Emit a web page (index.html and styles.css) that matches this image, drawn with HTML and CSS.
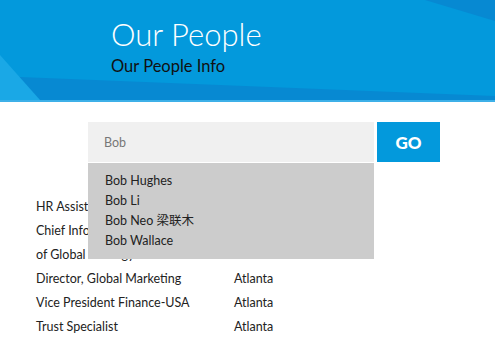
FILE: index.html
```html
<!DOCTYPE html>
<html>
  <head>
    <meta charset="UTF-8" />
    <title>Our People</title>
    <link rel="stylesheet" href="styles.css">
  </head>

  <body>
    <div class="hero">
      <svg class="hero-bg" viewBox="0 0 495 100" preserveAspectRatio="none">
        <polygon points="20,77 495,96 495,100 0,100 0,76" fill="#0789d2" />
        <polygon points="0,55 40,100 0,100" fill="#1aa8e6" />
        <polygon points="425,0 495,0 495,21" fill="#0789d2" />
      </svg>
      <h1>Our People</h1>
      <h2>Our People Info</h2>
    </div>

    <div class="search">
      <div class="search-box">
        <input type="text" class="search-input" value="Bob" />
        <ul class="suggest">
          <li>Bob Hughes</li>
          <li>Bob Li</li>
          <li>Bob Neo 梁联木</li>
          <li>Bob Wallace</li>
        </ul>
      </div>
      <button class="go">GO</button>
    </div>

    <table class="people">
      <tr><td>HR Assistant</td><td>Atlanta</td></tr>
      <tr><td>Chief Information Officer, Head<br />of Global Strategy Services</td><td>Atlanta</td></tr>
      <tr><td>Director, Global Marketing</td><td>Atlanta</td></tr>
      <tr><td>Vice President Finance-USA</td><td>Atlanta</td></tr>
      <tr><td>Trust Specialist</td><td>Atlanta</td></tr>
    </table>
  </body>
</html>
```

FILE: styles.css
```css
body {
  margin: 0;
  font-family: Lato, "Noto Sans CJK SC", sans-serif;
  background-color: #fff;
  color: #222;
}

/* 顶部横幅 */
.hero {
  position: relative;
  height: 100px;
  padding-left: 111px;
  background-color: #0399dc;
  border-bottom: 2px solid #3db0e8;
  overflow: hidden;
}

.hero-bg {
  position: absolute;
  left: 0;
  top: 0;
  width: 100%;
  height: 100%;
}

.hero h1 {
  position: relative;
  margin: 0;
  padding-top: 15px;
  font-size: 31px;
  font-weight: 300;
  line-height: 38px;
  color: #fff;
}

.hero h2 {
  position: relative;
  margin: 2px 0 0 0;
  font-size: 16.5px;
  font-weight: 400;
  line-height: 22px;
  color: #111;
}

/* 搜索 */
.search {
  display: flex;
  margin: 20px 0 0 88px;
}

.search-box {
  position: relative;
  width: 286px;
}

.search-input {
  display: block;
  width: 100%;
  height: 40px;
  box-sizing: border-box;
  padding: 0 16px;
  border: none;
  background-color: #f0f0f0;
  font-family: Lato, sans-serif;
  font-size: 12.5px;
  color: #777;
}

.suggest {
  position: absolute;
  left: 0;
  top: 41px;
  width: 100%;
  margin: 0;
  padding: 8px 0;
  list-style: none;
  background-color: #ccc;
  z-index: 2;
}

.suggest li {
  padding-left: 17px;
  font-size: 12.5px;
  line-height: 20px;
  color: #222;
}

.go {
  width: 63px;
  height: 40px;
  margin-left: 3px;
  border: none;
  background-color: #0399dc;
  color: #fff;
  font-family: Lato, sans-serif;
  font-size: 17px;
  font-weight: 900;
  cursor: pointer;
}

/* 人员列表 */
.people {
  margin: 33px 0 0 36px;
  border-collapse: collapse;
  font-size: 12.5px;
  color: #222;
}

.people td {
  padding: 0;
  line-height: 24px;
  vertical-align: top;
}

.people td:first-child {
  width: 198px;
}
```
